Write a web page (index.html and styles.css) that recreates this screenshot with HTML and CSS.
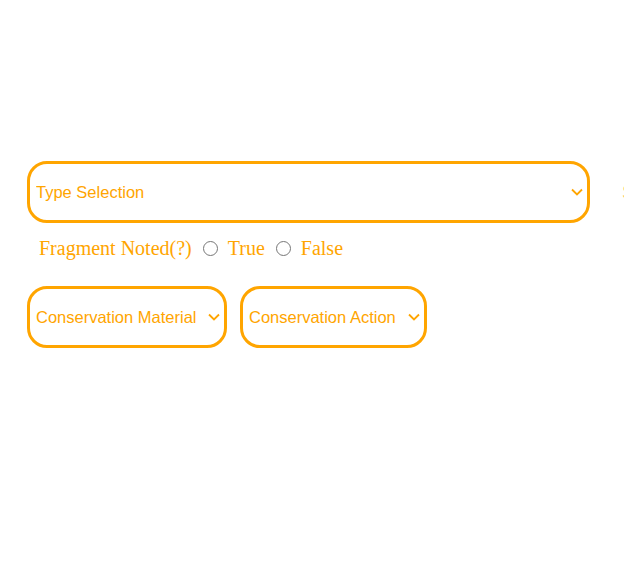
FILE: index.html
```html
<!DOCTYPE html>
<html>
<head>
<meta charset="utf-8">
<link rel="stylesheet" href="styles.css">
</head>
<body>
<div class="page">
  <div class="row first-row">
    <div class="sel-wrap">
      <select class="sel sel-wide">
        <option>Type Selection</option>
      </select>
      <svg class="chev" width="12" height="8" viewBox="0 0 12 8"><path d="M1 1.5 L6 6.5 L11 1.5" fill="none" stroke="#ffa500" stroke-width="1.8"/></svg>
    </div>
    <span class="clipped">S</span>
  </div>
  <div class="radio-row">
    <span class="label">Fragment Noted(?)</span>
    <input type="radio" name="frag" id="t"><label for="t" class="label">True</label>
    <input type="radio" name="frag" id="f"><label for="f" class="label">False</label>
  </div>
  <div class="row">
    <div class="sel-wrap">
      <select class="sel sel-material">
        <option>Conservation Material</option>
      </select>
      <svg class="chev" width="12" height="8" viewBox="0 0 12 8"><path d="M1 1.5 L6 6.5 L11 1.5" fill="none" stroke="#ffa500" stroke-width="1.8"/></svg>
    </div>
    <div class="sel-wrap">
      <select class="sel sel-action">
        <option>Conservation Action</option>
      </select>
      <svg class="chev" width="12" height="8" viewBox="0 0 12 8"><path d="M1 1.5 L6 6.5 L11 1.5" fill="none" stroke="#ffa500" stroke-width="1.8"/></svg>
    </div>
  </div>
</div>
</body>
</html>
```
FILE: styles.css
```css
html, body {
  margin: 0;
  padding: 0;
  background: #ffffff;
}
.page {
  padding: 161px 0 0 27px;
  display: flex;
  flex-direction: column;
}
.row {
  display: flex;
  align-items: center;
  gap: 13px;
}
.first-row {
  gap: 32px;
}
.sel-wrap {
  position: relative;
  display: flex;
}
.sel {
  -webkit-appearance: none;
  appearance: none;
  box-sizing: border-box;
  height: 62px;
  border: 3px solid #ffa500;
  border-radius: 20px;
  color: #ffa500;
  background: #ffffff;
  font-family: "Liberation Sans", Arial, sans-serif;
  font-size: 16.5px;
  padding: 0 24px 0 6px;
  margin: 0;
  outline: none;
}
.sel-wide {
  width: 563px;
}
.sel-material {
  width: 200px;
}
.sel-action {
  width: 187px;
}
.chev {
  position: absolute;
  right: 7px;
  top: 27px;
  pointer-events: none;
}
.clipped {
  display: inline-block;
  width: 2px;
  overflow: hidden;
  color: #ffa500;
  opacity: 0.6;
  font-family: "Liberation Sans", Arial, sans-serif;
  font-size: 20px;
  line-height: 23px;
}
.radio-row {
  box-sizing: border-box;
  display: flex;
  align-items: center;
  height: 63px;
  padding: 14px 0 26px 12px;
  font-family: "Liberation Serif", "Times New Roman", serif;
  font-size: 20px;
  line-height: 23px;
  color: #ffa500;
}
.radio-row input {
  width: 15px;
  height: 15px;
  margin: 0 10px 0 11px;
}
.label {
  color: #ffa500;
}
```
